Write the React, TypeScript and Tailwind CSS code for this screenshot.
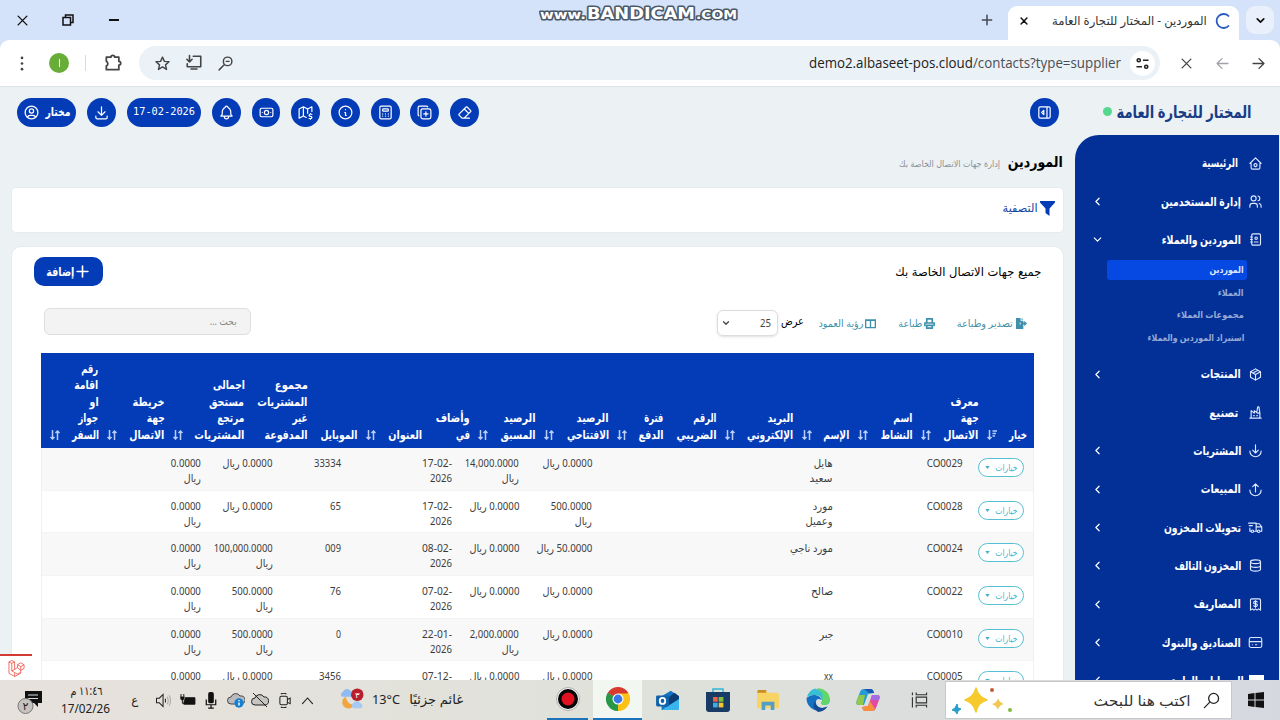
import React, { useLayoutEffect, useRef } from "react";

/** A single line of text, stretched or condensed to the width of its box. */
function Fit({ className = "", ltr = false, children }: { className?: string; ltr?: boolean; children: React.ReactNode }) {
  const box = useRef<HTMLSpanElement>(null);
  const text = useRef<HTMLSpanElement>(null);
  useLayoutEffect(() => {
    const b = box.current;
    const t = text.current;
    if (!b || !t) return;
    t.style.transform = "none";
    const ratio = b.getBoundingClientRect().width / t.getBoundingClientRect().width;
    t.style.transform = `scaleX(${ratio})`;
  });
  return (
    <span ref={box} dir={ltr ? "ltr" : "rtl"} className={"block shrink-0 whitespace-nowrap " + className}>
      <span ref={text} className={"inline-block " + (ltr ? "origin-left" : "origin-right")}>{children}</span>
    </span>
  );
}

function Ic({ d, className = "size-4", sw = 2 }: { d: string; className?: string; sw?: number }) {
  return (
    <svg viewBox="0 0 24 24" fill="none" stroke="currentColor" strokeWidth={sw} strokeLinecap="round" strokeLinejoin="round" className={"shrink-0 " + className}>
      <path d={d} />
    </svg>
  );
}

const P = {
  user: "M12 12m-9 0a9 9 0 1 0 18 0a9 9 0 1 0 -18 0M12 10m-3 0a3 3 0 1 0 6 0a3 3 0 1 0 -6 0M6.168 18.849a4 4 0 0 1 3.832 -2.849h4a4 4 0 0 1 3.834 2.855",
  download: "M4 17v2a2 2 0 0 0 2 2h12a2 2 0 0 0 2 -2v-2M7 11l5 5l5 -5M12 4v12",
  bell: "M10 5a2 2 0 1 1 4 0a7 7 0 0 1 4 6v3a4 4 0 0 0 2 3h-16a4 4 0 0 0 2 -3v-3a7 7 0 0 1 4 -6M9 17v1a3 3 0 0 0 6 0v-1",
  cash: "M12 12m-3 0a3 3 0 1 0 6 0a3 3 0 1 0 -6 0M3 8a2 2 0 0 1 2 -2h14a2 2 0 0 1 2 2v8a2 2 0 0 1 -2 2h-14a2 2 0 0 1 -2 -2zM18 12h.01M6 12h.01",
  map: "M13 19l-4 -2l-6 3v-13l6 -3l6 3l6 -3v6.500M9 4v13M15 7v6M21 14.500h-2.500a1.500 1.500 0 0 0 0 3h1a1.500 1.500 0 0 1 0 3h-2.500M19 20.500v1M19 13.500v1",
  info: "M3 12a9 9 0 1 0 18 0a9 9 0 0 0 -18 0M12 8h.01M11 12h1v4h1",
  calc: "M4 3m0 2a2 2 0 0 1 2 -2h12a2 2 0 0 1 2 2v14a2 2 0 0 1 -2 2h-12a2 2 0 0 1 -2 -2zM8 7m0 1a1 1 0 0 1 1 -1h6a1 1 0 0 1 1 1v1a1 1 0 0 1 -1 1h-6a1 1 0 0 1 -1 -1zM8 14v.01M12 14v.01M16 14v.01M8 17v.01M12 17v.01M16 17v.01",
  copyPlus: "M7 9.667a2.667 2.667 0 0 1 2.667 -2.667h8.666a2.667 2.667 0 0 1 2.667 2.667v8.666a2.667 2.667 0 0 1 -2.667 2.667h-8.666a2.667 2.667 0 0 1 -2.667 -2.667zM4 16.700a2 2 0 0 1 -1 -1.700v-10c0 -1.100 .9 -2 2 -2h10c.75 0 1.158 .385 1.500 1M11 14h6M14 11v6",
  eraser: "M19 20h-10.500l-4.210 -4.300a1 1 0 0 1 0 -1.410l10 -10a1 1 0 0 1 1.410 0l5 5a1 1 0 0 1 0 1.410l-9.200 9.300M18 13.300l-6.300 -6.300",
  panel: "M4 4m0 2a2 2 0 0 1 2 -2h12a2 2 0 0 1 2 2v12a2 2 0 0 1 -2 2h-12a2 2 0 0 1 -2 -2zM15.500 4v16M11 9l-3 3l3 3z",
  home: "M5 12h-2l9 -9l9 9h-2M5 12v7a2 2 0 0 0 2 2h10a2 2 0 0 0 2 -2v-7M12 12l2.200 1.300v2.600l-2.200 1.300l-2.200 -1.300v-2.600z",
  users: "M9 7m-4 0a4 4 0 1 0 8 0a4 4 0 1 0 -8 0M3 21v-2a4 4 0 0 1 4 -4h4a4 4 0 0 1 4 4v2M16 3.130a4 4 0 0 1 0 7.750M21 21v-2a4 4 0 0 0 -3 -3.850",
  book: "M20 5v14a2 2 0 0 1 -2 2h-10a2 2 0 0 1 -2 -2v-14a2 2 0 0 1 2 -2h10a2 2 0 0 1 2 2zM10 16h6M13 10m-2 0a2 2 0 1 0 4 0a2 2 0 1 0 -4 0M4 8h3M4 12h3M4 16h3",
  box: "M12 3l8 4.500v9l-8 4.500l-8 -4.500v-9l8 -4.500M12 12l8 -4.500M12 12v9M12 12l-8 -4.500M16 5.250l-8 4.500",
  factory: "M3 21h18M5 21v-12l5 4v-4l5 4h4M19 21v-8l-1.436 -9.574a.5 .5 0 0 0 -.495 -.426h-1.145a.5 .5 0 0 0 -.494 .418l-1.430 8.582M9 17h1M14 17h1",
  buy: "M3 13a9 9 0 0 0 18 0M12 3v13M7.500 11.500l4.500 4.500l4.500 -4.500",
  sell: "M3 13a9 9 0 0 0 18 0M12 16v-13M7.500 7.500l4.500 -4.500l4.500 4.500",
  truck: "M7 18m-2 0a2 2 0 1 0 4 0a2 2 0 1 0 -4 0M17 18m-2 0a2 2 0 1 0 4 0a2 2 0 1 0 -4 0M5 18h-2v-5M1 5h12v13M9 18h6M19 18h3v-7h-9M13 6h5l4 5M2 9h5",
  db: "M12 6m-8 0a8 3 0 1 0 16 0a8 3 0 1 0 -16 0M4 6v6a8 3 0 0 0 16 0v-6M4 12v6a8 3 0 0 0 16 0v-6",
  receipt: "M4 21v-16a2 2 0 0 1 2 -2h12a2 2 0 0 1 2 2v16l-3 -2l-2.500 2l-2.500 -2l-2.500 2l-2.500 -2zM14.800 8a2 2 0 0 0 -1.800 -1h-2a2 2 0 1 0 0 4h2a2 2 0 1 1 0 4h-2a2 2 0 0 1 -1.800 -1M12 5.500v11",
  card: "M2 7a3 3 0 0 1 3 -3h14a3 3 0 0 1 3 3v10a3 3 0 0 1 -3 3h-14a3 3 0 0 1 -3 -3zM2 10.500h20M7 15.500h.01M12 15.500h2",
  left: "M15 6l-6 6l6 6",
  down: "M6 9l6 6l6 -6",
  x: "M5 5l14 14M19 5l-14 14",
};

function Round({ d }: { d: string }) {
  return (
    <div className="flex h-[29px] w-[28.800px] shrink-0 items-center justify-center rounded-full bg-[#043cb8] text-white">
      <Ic d={d} className="size-[17px]" sw={1.7} />
    </div>
  );
}

function TabBar() {
  return (
    <div className="flex h-10 items-center bg-[#d4e2fa] text-[#111]">
      <Ic d={P.x} className="ml-[15px] size-[15px]" sw={2.2} />
      <svg viewBox="0 0 12 12" className="ml-[32px] size-[12px]" fill="none" stroke="currentColor" strokeWidth="1.500"><path d="M1 3.500h7.500v7.500h-7.500zM3.500 3v-2h7.500v7.500h-2" /></svg>
      <div className="ml-[35px] h-[1.500px] w-[10px] bg-[#111]" />
      <div className="ml-[420px] w-[200px] self-start pt-[2px]">
        <svg viewBox="0 0 200 22" className="h-[22px] w-[200px]">
          <g stroke="#4b5968" strokeWidth="3" strokeLinejoin="round" fill="#fff" fontFamily="DejaVu Sans" fontWeight="bold" style={{ paintOrder: "stroke" }}>
            <text x="1" y="16.500" fontSize="13" textLength="46" lengthAdjust="spacingAndGlyphs">www.</text>
            <text x="48" y="17" fontSize="15.500" textLength="108" lengthAdjust="spacingAndGlyphs">BANDICAM</text>
            <text x="157" y="16.500" fontSize="11.500" textLength="41" lengthAdjust="spacingAndGlyphs">.COM</text>
          </g>
        </svg>
      </div>
      <Ic d="M12 4v16M4 12h16" className="ml-[241px] size-[14px] text-[#444b55]" sw={2.6} />
      <div className="ml-[14px] flex h-[34px] w-[231px] items-center self-end rounded-t-[9px] bg-white pb-[5px]">
        <Ic d={P.x} className="ml-[11px] size-[10px]" sw={3.6} />
        <Fit className="mt-[1px] ml-[23px] w-[155px] text-[12px] text-[#333]">الموردين - المختار للتجارة العامة</Fit>
        <svg viewBox="0 0 16 16" className="ml-[8px] size-[16px]" fill="none" stroke="#2c5bbd" strokeWidth="1.800"><path d="M14 3.500A7 7 0 1 0 14 12.500" /></svg>
      </div>
      <div className="ml-[7px] flex size-[28px] items-center justify-center rounded-[9px] bg-[#e9f0fc]"><Ic d={P.down} className="size-[13px]" sw={3.2} /></div>
    </div>
  );
}

function AddressBar() {
  return (
    <div className="bg-[#d4e2fa]">
      <div className="flex h-[47px] items-center rounded-t-[9px] border-b border-[#dfe4e8] bg-white text-[#444]">
        <svg viewBox="0 0 4 16" className="ml-[20px] h-[15px] w-[4px]" fill="currentColor"><circle cx="2" cy="2" r="1.400" /><circle cx="2" cy="8" r="1.400" /><circle cx="2" cy="14" r="1.400" /></svg>
        <div className="ml-[25px] flex size-[20px] items-center justify-center rounded-full bg-[#67ad38]"><div className="h-[8px] w-px bg-white" /></div>
        <div className="ml-[16px] h-[16px] w-px bg-[#cfdcf0]" />
        <Ic d="M4 5h5.500a2 2 0 0 1 4.500 0h5v5a2 2 0 0 1 0 4.500v5.500h-15v-4.500a3 3 0 0 0 0 -5.500z" className="ml-[17px] size-[20px]" sw={2.1} />
        <div className="ml-[16px] flex h-[34px] w-[1021px] items-center rounded-full bg-[#eaf1f7]">
          <Ic d="M12 3l2.700 6l6.500 .6l-5 4.300l1.500 6.500l-5.700 -3.500l-5.700 3.500l1.500 -6.500l-5 -4.300l6.500 -.6z" className="ml-[15px] size-[17px]" sw={2} />
          <Ic d="M11 3h10v14h-18v-4M6 2v8M2.500 7l3.500 3.500l3.500 -3.500M8 20h8" className="ml-[14px] size-[18px]" sw={2.1} />
          <Ic d="M15 9m-6 0a6 6 0 1 0 12 0a6 6 0 1 0 -12 0M10.500 13.500l-7.500 7.500M13 9h4" className="ml-[14px] size-[17px]" sw={2} />
          <Fit ltr className="ml-[575px] w-[312px] font-['Open_Sans','Noto_Sans',sans-serif] text-[14px] leading-[20px] text-[#4a4f54] -mt-[1px]"><span className="text-[#222]">demo2.albaseet-pos.cloud</span>/contacts?type=supplier</Fit>
          <div className="ml-[9px] flex size-[25px] items-center justify-center rounded-full bg-white">
            <svg viewBox="0 0 14 14" className="size-[13px]" fill="none" stroke="#222" strokeWidth="1.700"><circle cx="3" cy="3.500" r="1.700" /><path d="M7.500 3.500h6M.5 10.500h6" /><circle cx="11" cy="10.500" r="1.700" /></svg>
          </div>
        </div>
        <Ic d={P.x} className="ml-[19px] size-[15px]" sw={2.1} />
        <Ic d="M22 12h-20M11 3l-9 9l9 9" className="ml-[22px] size-[13px] text-[#a0a4a8]" sw={2.4} />
        <Ic d="M2 12h20M13 3l9 9l-9 9" className="ml-[23px] size-[13px]" sw={2.6} />
      </div>
    </div>
  );
}

type Nav = { t: string; w: string; d: string; arrow?: boolean; pad?: string };
const navTop: Nav[] = [
  { t: "الرئيسية", w: "w-[36px]", d: P.home, pad: "mr-[10px]" },
  { t: "إدارة المستخدمين", w: "w-[80px]", d: P.users, arrow: true },
];
const navBottom: Nav[] = [
  { t: "المنتجات", w: "w-[40px]", d: P.box, arrow: true },
  { t: "تصنيع", w: "w-[29px]", d: P.factory, pad: "mr-[10px]" },
  { t: "المشتريات", w: "w-[48px]", d: P.buy, arrow: true },
  { t: "المبيعات", w: "w-[40px]", d: P.sell, arrow: true },
  { t: "تحويلات المخزون", w: "w-[77px]", d: P.truck, arrow: true },
  { t: "المخزون التالف", w: "w-[67px]", d: P.db, arrow: true },
  { t: "المصاريف", w: "w-[47px]", d: P.receipt, arrow: true },
  { t: "الصناديق والبنوك", w: "w-[79px]", d: P.card, arrow: true },
];

function NavRow({ t, w, d, arrow, pad = "mr-[7px]", open = false }: Nav & { open?: boolean }) {
  return (
    <div className="flex h-[38.350px] shrink-0 items-center pr-[16px] pl-[16px] text-white">
      <Ic d={d} className="size-[15px] text-[#dfe9ff]" sw={1.8} />
      <Fit className={pad + " text-[12px] font-bold " + w}>{t}</Fit>
      <span className="grow" />
      {arrow && <Ic d={open ? P.down : P.left} className="size-[13px]" sw={2.2} />}
    </div>
  );
}

function Sidebar() {
  return (
    <aside className="flex w-[205px] shrink-0 flex-col">
      <div className="flex h-[48px] shrink-0 items-center pt-[1px] pr-[28px]">
        <Fit className="w-[135px] text-[17px] font-semibold text-[#183d86]">المختار للتجارة العامة</Fit>
        <span className="mr-[5px] size-[9px] rounded-full bg-[#54d88d]" />
      </div>
      <nav className="mr-px flex min-h-0 grow flex-col overflow-hidden rounded-tl-[24px] bg-[#033096] pt-[9px]">
        {navTop.map((n) => <NavRow key={n.t} {...n} />)}
        <NavRow t="الموردين والعملاء" w="w-[79px]" d={P.book} arrow open />
        <div className="mt-px flex shrink-0 flex-col pr-[32px] text-[9.500px] font-bold text-[#93a9d6]">
          <div className="flex h-[20px] w-[140px] items-center rounded-[3px] bg-[#0549e2] pr-[3px] text-[#dbe6ff]"><Fit className="w-[34px]">الموردين</Fit></div>
          <div className="flex h-[26px] items-center pr-[3px]"><Fit className="w-[26px]">العملاء</Fit></div>
          <div className="flex h-[19px] items-center pr-[3px]"><Fit className="w-[67px]">مجموعات العملاء</Fit></div>
          <div className="flex h-[26px] items-center pr-[3px]"><Fit className="w-[97px]">استيراد الموردين والعملاء</Fit></div>
        </div>
        <div className="h-[4px] shrink-0" />
        {navBottom.map((n) => <NavRow key={n.t} {...n} />)}
        <div className="flex h-[38px] shrink-0 items-center pr-[15px] pl-[16px] text-white">
          <span className="h-[11px] w-[15px] bg-white" />
          <Fit className="mr-[5px] w-[73px] text-[12px] font-bold">الحسابات العامة</Fit>
          <span className="grow" />
          <Ic d={P.left} className="size-[13px]" sw={2.2} />
        </div>
      </nav>
    </aside>
  );
}

type Line = [string, string];
type Head = { lines: Line[]; sort?: "both" | "desc"; cell: string };
const heads: Head[] = [
  { cell: "w-[48.500px]", lines: [["خيار", "w-[18px]"]] },
  { cell: "w-[66px]", sort: "desc", lines: [["معرف", "w-[28px]"], ["جهة", "w-[18px]"], ["الاتصال", "w-[35px]"]] },
  { cell: "w-[63px]", sort: "both", lines: [["اسم", "w-[19px]"], ["النشاط", "w-[32px]"]] },
  { cell: "w-[56px]", sort: "both", lines: [["الإسم", "w-[26px]"]] },
  { cell: "w-[77px]", sort: "both", lines: [["البريد", "w-[26px]"], ["الإلكتروني", "w-[46px]"]] },
  { cell: "w-[53px]", sort: "both", lines: [["الرقم", "w-[23px]"], ["الضريبي", "w-[40px]"]] },
  { cell: "w-[55px]", lines: [["فترة", "w-[19px]"], ["الدفع", "w-[25px]"]] },
  { cell: "w-[73px]", sort: "both", lines: [["الرصيد", "w-[32px]"], ["الافتتاحي", "w-[42px]"]] },
  { cell: "w-[66px]", sort: "both", lines: [["الرصيد", "w-[32px]"], ["المسبق", "w-[35px]"]] },
  { cell: "w-[47px]", sort: "both", lines: [["وأضاف", "w-[34px]"], ["في", "w-[14px]"]] },
  { cell: "w-[65px]", lines: [["العنوان", "w-[34px]"]] },
  { cell: "w-[50px]", sort: "both", lines: [["الموبايل", "w-[37px]"]] },
  { cell: "w-[63px]", lines: [["مجموع", "w-[33px]"], ["المشتريات", "w-[50px]"], ["غير", "w-[15px]"], ["المدفوعة", "w-[43px]"]] },
  { cell: "w-[80px]", lines: [["اجمالى", "w-[32px]"], ["مستحق", "w-[35px]"], ["مرتجع", "w-[27px]"], ["المشتريات", "w-[50px]"]] },
  { cell: "w-[66px]", sort: "both", lines: [["خريطة", "w-[32px]"], ["جهة", "w-[18px]"], ["الاتصال", "w-[35px]"]] },
  { cell: "w-[57px]", sort: "both", lines: [["رقم", "w-[17px]"], ["اقامة", "w-[24px]"], ["او", "w-[9px]"], ["جواز", "w-[20px]"], ["السفر", "w-[27px]"]] },
  { cell: "w-0", sort: "both", lines: [] },
];

function SortIcon({ desc }: { desc: boolean }) {
  return (
    <svg viewBox="0 0 10 10" className="absolute -right-[18px] bottom-[8px] size-[10px]" fill="none" stroke="#b9cdf6" strokeWidth="1.500">
      {desc ? <path d="M2.500 0v9M.5 7l2 2l2-2M5.500 1h4.500M5.500 3.500h3.500M5.500 6h2.500" /> : <path d="M2.500 0v9M.5 7l2 2l2-2M7.500 10v-9M5.500 3l2-2l2 2" />}
    </svg>
  );
}

const n0: Line = ["0.0000 ريال", "w-[50px]"];
const small: Line[] = [["0.0000", "w-[30px]"], ["ريال", "w-[17px]"]];
const rial: Line = ["ريال", "w-[17px]"];
type Row = { id: string; name: Line[]; open: Line[]; adv: Line[]; date: [string, string]; mobile: Line; due: Line[] };
const rows: Row[] = [
  { id: "CO0029", name: [["هايل", "w-[19px]"], ["سعيد", "w-[23px]"]], open: [n0], adv: [["14,000.0000", "w-[54px]"], rial], date: ["17-02-", "2026"], mobile: ["33334", "w-[27px]"], due: [n0] },
  { id: "CO0028", name: [["مورد", "w-[20px]"], ["وعميل", "w-[27px]"]], open: [["500.0000", "w-[41px]"], rial], adv: [n0], date: ["17-02-", "2026"], mobile: ["65", "w-[11px]"], due: [n0] },
  { id: "CO0024", name: [["مورد ناجي", "w-[43px]"]], open: [["50.0000 ريال", "w-[56px]"]], adv: [n0], date: ["08-02-", "2026"], mobile: ["009", "w-[16px]"], due: [["100,000.0000", "w-[59px]"], rial] },
  { id: "CO0022", name: [["صالح", "w-[22px]"]], open: [n0], adv: [n0], date: ["07-02-", "2026"], mobile: ["76", "w-[11px]"], due: [["500.0000", "w-[41px]"], rial] },
  { id: "CO0010", name: [["جبر", "w-[14px]"]], open: [n0], adv: [["2,000.0000", "w-[49px]"], rial], date: ["22-01-", "2026"], mobile: ["0", "w-[5px]"], due: [["500.0000", "w-[41px]"], rial] },
  { id: "CO0005", name: [["xx", "w-[9px]"]], open: [n0], adv: [n0], date: ["07-12-", "2025"], mobile: ["3456", "w-[22px]"], due: [n0] },
];

function Cell({ className, lines }: { className: string; lines: Line[] }) {
  return (
    <div className={"shrink-0 pt-[8px] " + className}>
      {lines.map(([t, w], i) => <Fit key={i} className={w}>{t}</Fit>)}
    </div>
  );
}

function Table() {
  return (
    <div className="mr-[29px] w-[993px] border-x border-[#f0f0f0]">
      <div className="-mx-px flex h-[95px] items-end bg-[#043cb8] pr-[7px] text-[12px] leading-[16.400px] font-bold text-white">
        {heads.map((h, i) => (
          <div key={i} className={"relative shrink-0 pb-[5px] " + h.cell}>
            {h.lines.map(([t, w]) => <Fit key={t} className={w}>{t}</Fit>)}
            {h.sort && <SortIcon desc={h.sort === "desc"} />}
          </div>
        ))}
      </div>
      {rows.map((r) => (
        <div key={r.id} className="flex h-[42.700px] border-b border-[#f4f4f4] pr-[9px] text-[10.500px] leading-[15px] text-[#3c3c3c] odd:bg-white even:bg-[#f8f8f8]">
          <div className="w-[61px] shrink-0 pt-[10px]">
            <div className="flex h-[19px] w-[46px] items-center justify-center gap-[6px] rounded-full border border-[#56bfd3] bg-white text-[#45b3cb]">
              <Fit className="w-[22px] text-[9px]">خيارات</Fit>
              <svg viewBox="0 0 6 4" className="h-[3px] w-[5px]"><path d="M0 0h6l-3 4z" fill="currentColor" /></svg>
            </div>
          </div>
          <Cell className="w-[130px]" lines={[[r.id, "w-[36px]"]]} />
          <Cell className="w-[241px]" lines={r.name} />
          <Cell className="w-[73px]" lines={r.open} />
          <Cell className="w-[67px]" lines={r.adv} />
          <div className="flex w-[111px] shrink-0 flex-col items-start pt-[8px]">
            <Fit ltr className="w-[30px]">{r.date[0]}</Fit>
            <Fit ltr className="w-[22px]">{r.date[1]}</Fit>
          </div>
          <Cell className="w-[68.500px]" lines={[r.mobile]} />
          <Cell className="w-[72px]" lines={r.due} />
          <Cell className="w-[40px]" lines={small} />
        </div>
      ))}
    </div>
  );
}

function Main() {
  return (
    <main className="flex w-[1064px] shrink-0 flex-col pl-[12px]">
      <div dir="ltr" className="flex h-[50px] shrink-0 items-center gap-[10.900px] pl-[5px]">
        <div className="flex h-[29px] w-[59px] shrink-0 items-center rounded-full bg-[#043cb8] pl-[6px] text-white">
          <Ic d={P.user} className="size-[17px]" sw={1.8} />
          <Fit className="ml-[5px] w-[25px] text-[12px] font-bold">مختار</Fit>
        </div>
        <Round d={P.download} />
        <div className="flex h-[29px] w-[74.500px] shrink-0 items-center justify-center rounded-full bg-[#043cb8] text-white">
          <Fit ltr className="w-[62px] font-['DejaVu_Sans_Mono',monospace] text-[10.500px]">17-02-2026</Fit>
        </div>
        {[P.bell, P.cash, P.map, P.info, P.calc, P.copyPlus, P.eraser].map((d) => <Round key={d} d={d} />)}
        <span className="grow" />
        <div className="mr-[5px] flex"><Round d={P.panel} /></div>
      </div>
      <div className="flex h-[50px] shrink-0 items-center pr-[1px] font-['DejaVu_Sans',sans-serif]">
        <Fit className="w-[55px] text-[15px] font-bold text-black">الموردين</Fit>
        <Fit className="mt-[5px] mr-[8px] w-[101px] text-[9px] text-[#8a9095]">إدارة جهات الاتصال الخاصة بك</Fit>
      </div>
      <section className="-ml-px flex h-[46px] shrink-0 items-center rounded-[5px] border border-[#e6ebee] bg-white pr-[8px] pb-[3px] text-[#123f9d]">
        <svg viewBox="0 0 15 15" className="size-[15px]"><path d="M0 0h15v1.500L9.500 7.500V15L5.500 12V7.500L0 1.500z" fill="#043cb8" /></svg>
        <Fit className="mr-[2px] w-[35px] font-['DejaVu_Sans',sans-serif] text-[11.500px]">التصفية</Fit>
      </section>
      <section className="mt-[13px] -ml-px h-[500px] shrink-0 rounded-[10px] border border-[#e6ebee] bg-white">
        <div className="flex h-[49px] items-center justify-between pr-[22px] pl-[22px]">
          <Fit className="w-[146px] font-['DejaVu_Sans',sans-serif] text-[12px] text-black">جميع جهات الاتصال الخاصة بك</Fit>
          <button className="flex h-[29px] w-[69px] items-center rounded-[10px] bg-[#043cb8] pr-[14px] text-white">
            <Ic d="M12 2v20M2 12h20" className="size-[13px]" sw={3} />
            <Fit className="mr-[2px] w-[28px] text-[12px] font-bold">إضافة</Fit>
          </button>
        </div>
        <div className="flex h-[57px] items-center pr-[36px] pb-[3px] text-[10px] text-[#3f91ab]">
          <svg viewBox="0 0 12 12" className="size-[11px]" fill="currentColor"><path d="M0 0h5v3h3v2H4v2h4v5H0zM6 0l2 2H6zM9 3l3 3-3 3V7H5V5h4z" /></svg>
          <Fit className="mr-[3px] w-[56px]">تصدير وطباعة</Fit>
          <svg viewBox="0 0 12 12" className="mr-[22px] size-[11px]" fill="none" stroke="currentColor" strokeWidth="1.800"><path d="M3 5V1h6v4M1 9V5.500h10V9M3 8h6v3H3z" /></svg>
          <Fit className="mr-[2px] w-[24px]">طباعة</Fit>
          <svg viewBox="0 0 12 12" className="mr-[22px] h-[11px] w-[11px]" fill="none" stroke="currentColor" strokeWidth="1.500"><path d="M.7 2h10.600v8.500H.7zM6 2v8.500M.7 2.500h10.600" /></svg>
          <Fit className="mr-[2px] w-[45px]">رؤية العمود</Fit>
          <Fit className="-mt-[2px] mr-[14px] w-[23px] font-['DejaVu_Sans',sans-serif] text-[11px] text-black">عرض</Fit>
          <div className="mr-[3px] flex h-[26px] w-[61px] items-center justify-between rounded-[6px] border border-[#ddd] pr-[6px] pl-[3px] text-[#444] shadow-sm">
            <Fit ltr className="w-[11px]">25</Fit>
            <Ic d={P.down} className="size-[10px]" sw={3} />
          </div>
          <div className="-mt-[4px] mr-auto ml-[32px] flex h-[27px] w-[207px] items-center rounded-[6px] border border-[#dedede] bg-[#f3f3f3] pr-[13px]">
            <Fit className="w-[27px] text-[#888]">بحث ...</Fit>
          </div>
        </div>
        <Table />
      </section>
    </main>
  );
}

function Taskbar() {
  return (
    <footer dir="ltr" className="flex h-10 items-center bg-linear-to-r from-[#e7e1dc] via-[#dfe2da] to-[#d5d8df] text-[#222]">
      <svg viewBox="0 0 28 28" className="ml-[16px] size-[28px]">
        <path d="M9 5h17v12h-4v4l-4-4H9z" fill="#111" /><path d="M12 9h10M12 12.500h10" stroke="#ddd" strokeWidth="1" />
        <circle cx="9.500" cy="20" r="7.500" fill="#c5c2c0" stroke="#777" /><text x="9.500" y="24" textAnchor="middle" fontSize="11" fontFamily="DejaVu Sans" fill="#222">٢</text>
      </svg>
      <div className="ml-[16px] flex w-[50px] flex-col items-end text-[12px] leading-[18px]">
        <Fit className="mr-[7px] w-[32px]">١١:٤٦ م</Fit>
        <Fit ltr className="w-[49px]">17/02/26</Fit>
      </div>
      <Fit className="ml-[21px] w-[7px] text-[12px]">ع</Fit>
      <svg viewBox="0 0 18 16" className="ml-[17px] h-[15px] w-[18px]" fill="none" stroke="#222" strokeWidth="1.100"><path d="M1 5.500h3l4-4v13l-4-4H1z" /><path d="M10.500 6v4" /><path d="M12.500 4q2 4 0 8M14.500 2.500q3 5.500 0 11" stroke="#aaa" /></svg>
      <svg viewBox="0 0 18 14" className="ml-[6px] h-[13px] w-[17px]"><path d="M6 4h11v7H5z" fill="#111" stroke="#111" /><path d="M1 2.500h5v2a2.500 2.500 0 0 1-5 0z" fill="#111" stroke="#e4e0dc" strokeWidth=".5" /><path d="M2 0v3M5 0v3M3.500 6v4h3" fill="none" stroke="#111" /></svg>
      <svg viewBox="0 0 12 18" className="ml-[9px] h-[17px] w-[12px]"><rect x="3" y="0" width="6" height="12" rx="2" fill="#111" /><path d="M1 8v5.500h10V8M6 13v4M3 17h6" fill="none" stroke="#111" strokeWidth="1.300" /></svg>
      <svg viewBox="0 0 18 16" className="ml-[10px] h-[16px] w-[18px]"><path d="M4 12a3.500 3.500 0 0 1 0-7A5 5 0 0 1 13 4a4 4 0 0 1 2 8z" fill="#bbb" stroke="#444" /><circle cx="12" cy="11" r="4.700" fill="#1580d2" /><path d="M12 10.500v3M12 8v1.300" stroke="#fff" strokeWidth="1.400" /></svg>
      <svg viewBox="0 0 18 16" className="ml-[6px] h-[16px] w-[18px]" fill="#c7c5c2" stroke="#222"><path d="M4 13a3.500 3.500 0 0 1 0-7A5 5 0 0 1 13 5a4 4 0 0 1 1 8zM2 1l14 14" /></svg>
      <svg viewBox="0 0 16 16" className="ml-[9px] size-[15px]" fill="none" stroke="#222" strokeWidth="1.100"><rect x="2" y="3.500" width="8" height="9" rx="1.500" /><path d="M10 7l3-1.500v6L10 10M3 1q3-1.500 6 0M3 15q3 1.500 6 0" /></svg>
      <Ic d="M4 17l8 -9l8 9" className="ml-[7px] size-[15px]" sw={1.8} />
      <svg viewBox="0 0 26 26" className="ml-[24px] size-[25px]">
        <path d="M8 10a6.500 6.500 0 1 0 9 8q-7 1-9-8z" transform="translate(-1 -1)" fill="#f2a640" /><path d="M3 9a3 3 0 0 1 1-5a4.500 4.500 0 0 1 8-1a3.500 3.500 0 0 1 2 6z" fill="#8ebcf2" /><path d="M15 21a3 3 0 0 1 0-5.500a4 4 0 0 1 7 0a3 3 0 0 1 1 5.500z" fill="#a7caf5" />
        <circle cx="19" cy="7" r="6.500" fill="#b81f2c" /><text x="19" y="10.500" textAnchor="middle" fontSize="9" fontFamily="DejaVu Sans" fill="#fff">٣</text>
      </svg>
      <Fit ltr className="ml-[8px] w-[28px] text-[13px]">13°C</Fit>
      <Fit className="ml-[9px] w-[54px] text-[13px]">غائم جزئيًا</Fit>
      <div className="ml-[84px] flex h-10 w-[41px] items-center justify-center border-b-2 border-[#1c73b9]">
        <svg viewBox="0 0 24 24" className="size-[24px]"><circle cx="12" cy="12" r="11.500" fill="#eee" stroke="#999" strokeWidth=".7" /><circle cx="12" cy="12" r="10" fill="#050505" /><circle cx="12" cy="12" r="6.500" fill="#e01222" /></svg>
      </div>
      <div className="ml-[5px] flex h-10 w-[49px] items-center justify-center border-b-2 border-[#1c73b9] bg-[#f3f7f2]">
        <svg viewBox="0 0 24 24" className="size-[24px]"><path d="M12 12L1.600 6A12 12 0 0 1 22.400 6z" fill="#d93a2f" /><path d="M12 12L22.400 6A12 12 0 0 1 12 24z" fill="#fbc116" /><path d="M12 12v12A12 12 0 0 1 1.600 6z" fill="#279847" /><path d="M12 6.500h10.600L17 15l-5 9 5-12z" fill="#fbc116" /><path d="M1.600 6l5.200 9 5.200 3v-6z" fill="#279847" /><circle cx="12" cy="12" r="5.500" fill="#fff" /><circle cx="12" cy="12" r="4.400" fill="#3b78e7" /></svg>
      </div>
      <svg viewBox="0 0 26 24" className="ml-[13px] h-[22px] w-[26px]"><path d="M6 8L16 2l9 6v13a2 2 0 0 1-2 2H6z" fill="#1673c4" /><path d="M10 12L20 4l5 4v4l-13 10z" fill="#0a3d75" /><path d="M6 23L25 11v10a2 2 0 0 1-2 2z" fill="#39b5ee" /><rect x="0" y="7" width="14" height="12" rx="1.500" fill="#0f62ac" /><ellipse cx="7" cy="13" rx="3" ry="3.300" fill="none" stroke="#fff" strokeWidth="2" /></svg>
      <svg viewBox="0 0 24 24" className="ml-[25px] size-[24px]"><path d="M7 5V1h10v4" fill="none" stroke="#31b5d8" strokeWidth="1.500" /><path d="M0 4h24v17a3 3 0 0 1-3 3H3a3 3 0 0 1-3-3z" fill="#173b64" /><path d="M7 9h4.700v4.700H7z" fill="#ed6246" /><path d="M12.700 9h4.700v4.700h-4.700z" fill="#83bd40" /><path d="M7 14.700h4.700v4.700H7z" fill="#3aaee8" /><path d="M12.700 14.700h4.700v4.700h-4.700z" fill="#f5c433" /></svg>
      <svg viewBox="0 0 24 22" className="ml-[27px] h-[20px] w-[22px]"><path d="M0 2a2 2 0 0 1 2-2h7l3 3h10a2 2 0 0 1 2 2v15H0z" fill="#f8d465" /><path d="M1 0h9v3H0z" fill="#c98e1e" /><path d="M5 22v-9h14v9h-4v-5H9v5z" fill="#549dc9" /></svg>
      <svg viewBox="0 0 24 24" className="ml-[27px] size-[24px]"><path d="M1 9A12 12 0 0 1 24 12q0 5-6 5q-4-1-2-4q0-6-7-6t-8 2z" fill="#2fc0c5" /><path d="M11 0.200a12 12 0 0 1 13 11.800q-1 5-6 5q-3 0-3-2q3-3 0-7z" fill="#62d66a" /><path d="M9 .5A12 12 0 0 0 1 9q4-4 9-3q6 1 6 6q2-7-2-9z" fill="#35bfd8" /><path d="M0.500 10Q4 6.500 9 7q6 1 6.500 5q-3-2-5 0q-2 4 2 7q4 2 9-0.500A12 12 0 0 1 .5 10z" fill="#1470c2" /><path d="M10 12q-2 4 2.500 7q4 2 9-.5A12 12 0 0 1 12 24q-8-5-2-12z" fill="#164b92" /></svg>
      <svg viewBox="0 0 24 24" className="ml-[26px] size-[24px]"><path d="M8 1h7q2 0 3 4l-6 1-4 11H3q-4 0-2-5L4 4q1-3 4-3z" fill="#269bd4" /><path d="M1 12L3 7h6l-2 10H3q-4 0-2-5z" fill="#91c74b" /><path d="M16 23H9q-2 0-3-4l6-1 4-11h5q4 0 2 5l-3 8q-1 3-4 3z" fill="#e04aa2" /><path d="M9 23q-2 0-3-4l6-1 2-5 5 8q-1 2-3 2z" fill="#f8903b" /><path d="M8 1h7q2 0 3 4h-5z" fill="#1858b9" /><path d="M16 7h5q4 0 2 5h-8z" fill="#a36ce2" /></svg>
      <svg viewBox="0 0 18 16" className="ml-[31px] h-[16px] w-[17px]" fill="none" stroke="#333" strokeWidth="1.200"><path d="M1.500 0v3M1.500 5v11M5.500 0v2.500h11V0M5.500 5h11v6h-11zM5.500 16v-2.500h11V16" /></svg>
      <div className="ml-[17px] flex h-[38px] w-[287px] items-center border border-[#c8c8c8] bg-white">
        <svg viewBox="0 0 62 28" className="ml-[6px] h-[28px] w-[62px]"><path d="M24 2q2 9 11 12q-9 2-11 12q-3-10-11-12q9-3 11-12z" fill="#f6ca2c" stroke="#f6ca2c" strokeWidth="1.500" strokeLinejoin="round" /><path d="M46 12q1 4 6 6q-5 1-6 6q-1-4-6-6q5-1 6-6z" fill="#f2c752" /><path d="M5 18l1 4 3 1-3 2-1 3-2-3-3-1 3-2z" fill="#279dcb" stroke="#279dcb" /><circle cx="40" cy="4" r="2" fill="#c05b38" /><circle cx="58" cy="24" r="2" fill="#83b940" /></svg>
        <Fit className="ml-[80px] w-[97px] text-[14px] text-[#333]">اكتب هنا للبحث</Fit>
        <Ic d="M15 9m-7 0a7 7 0 1 0 14 0a7 7 0 1 0 -14 0M10 14l-8 8" className="ml-[12px] size-[17px]" sw={1.8} />
      </div>
      <svg viewBox="0 0 16 16" className="ml-[16px] size-[16px]" fill="#111"><path d="M0 2l6.500-1v6.500H0zM7.500 .9L16 0v7.500H7.500zM0 8.500h6.500V15L0 14zM7.500 8.500H16V16l-8.500-1z" /></svg>
    </footer>
  );
}

export default function App() {
  return (
    <div className="flex h-[720px] w-[1280px] flex-col overflow-hidden font-['Noto_Sans','DejaVu_Sans',sans-serif]">
      <TabBar />
      <AddressBar />
      <div dir="rtl" className="relative flex h-[593px] justify-between overflow-hidden bg-[#ecf1f4]">
        <Sidebar />
        <Main />
        <div className="absolute bottom-0 left-0 flex h-[26px] w-[32px] items-center justify-center border-t-2 border-[#d33a34] bg-white">
          <svg viewBox="0 0 18 18" className="size-[17px]" fill="none" stroke="#ed5a50" strokeWidth=".9"><path d="M1 2l3-1.500L7 2v8l3-2V5l3.500-2L17 5v4l-3.500 2v3L7 17.500 1 14zM1 2l3 1.500L7 2M4 3.500v8L7 10M4 11.500l6 3.500 3.500-2M10 5l3.500 2L17 5M13.500 7v4M10 8l3.500 3M7 14v3.500" /></svg>
        </div>
      </div>
      <Taskbar />
    </div>
  );
}
